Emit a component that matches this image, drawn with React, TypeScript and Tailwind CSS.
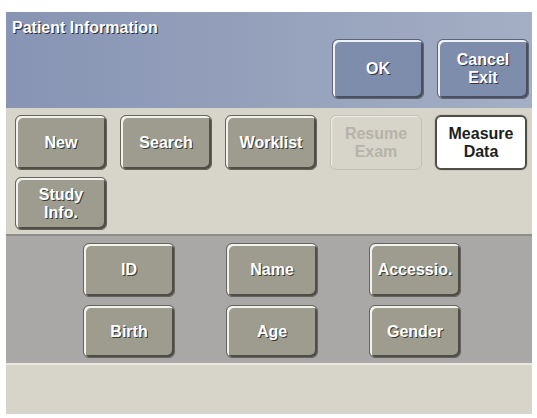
const font = { fontFamily: '"Liberation Sans", Arial, sans-serif' };

type Kind = 'blue' | 'gray' | 'disabled' | 'active';

const kindClass: Record<Kind, string> = {
  blue: 'bg-[#7e8dab] text-white border-[#5d6478] shadow-[inset_2px_2px_0_#eef0f4,inset_-2px_-2px_0_#4a5060] [text-shadow:1px_1px_0_#2f3340]',
  gray: 'bg-[#9d9c8f] text-white border-[#65655b] shadow-[inset_2px_2px_0_#f3f3ee,inset_-2px_-2px_0_#4e4e46] [text-shadow:1px_1px_0_#3a3a33]',
  disabled: 'bg-[#d7d4c9] text-[#b6b3a9] border-[#c2bfb4] shadow-[inset_1px_1px_0_#eeece6]',
  active: 'bg-white text-[#1e1e1e] border-[#4e4e46] border-2 shadow-[0_0_0_1px_#c9c6bb]',
};

function PanelButton({ label, kind = 'gray', h = 'h-[55px]' }: { label: string[]; kind?: Kind; h?: string }) {
  return (
    <button
      className={`w-[92px] ${h} rounded-[6px] border flex flex-col items-center justify-center text-[16px] font-bold leading-[18px] ${kindClass[kind]}`}
    >
      {label.map((l) => (
        <span key={l}>{l}</span>
      ))}
    </button>
  );
}

export default function App() {
  return (
    <div className="w-[537px] h-[418px] bg-white pt-[12px] pl-[6px] pr-[5px]" style={font}>
      <div className="flex flex-col w-[526px]">
        {/* title bar */}
        <div className="h-[96px] bg-gradient-to-r from-[#8794b3] to-[#a4aec4] flex flex-col">
          <div className="pl-[6px] pt-[6px] text-[16px] font-bold text-white leading-[19px] [text-shadow:1px_1px_0_#2a2d38]">
            Patient Information
          </div>
          <div className="flex justify-end gap-[13px] pr-[3px] pt-[2px]">
            <PanelButton label={['OK']} kind="blue" h="h-[60px]" />
            <PanelButton label={['Cancel', 'Exit']} kind="blue" h="h-[60px]" />
          </div>
        </div>

        {/* main actions */}
        <div className="h-[128px] bg-[#d7d4c9] pt-[7px] pl-[9px] flex flex-col gap-[7px] border-b-2 border-[#8e8d88]">
          <div className="flex gap-[13px]">
            <PanelButton label={['New']} />
            <PanelButton label={['Search']} />
            <PanelButton label={['Worklist']} />
            <PanelButton label={['Resume', 'Exam']} kind="disabled" />
            <PanelButton label={['Measure', 'Data']} kind="active" />
          </div>
          <div className="flex">
            <PanelButton label={['Study', 'Info.']} h="h-[53px]" />
          </div>
        </div>

        {/* search fields */}
        <div className="h-[129px] bg-[#a9a8a6] pt-[7px] pl-[77px] grid grid-cols-[92px_92px_92px] gap-x-[51px] gap-y-[8px] content-start border-b-2 border-[#ebe9e3]">
          <PanelButton label={['ID']} h="h-[54px]" />
          <PanelButton label={['Name']} h="h-[54px]" />
          <PanelButton label={['Accessio.']} h="h-[54px]" />
          <PanelButton label={['Birth']} h="h-[53px]" />
          <PanelButton label={['Age']} h="h-[53px]" />
          <PanelButton label={['Gender']} h="h-[53px]" />
        </div>

        <div className="h-[49px] bg-[#d7d4c9]" />
      </div>
    </div>
  );
}
